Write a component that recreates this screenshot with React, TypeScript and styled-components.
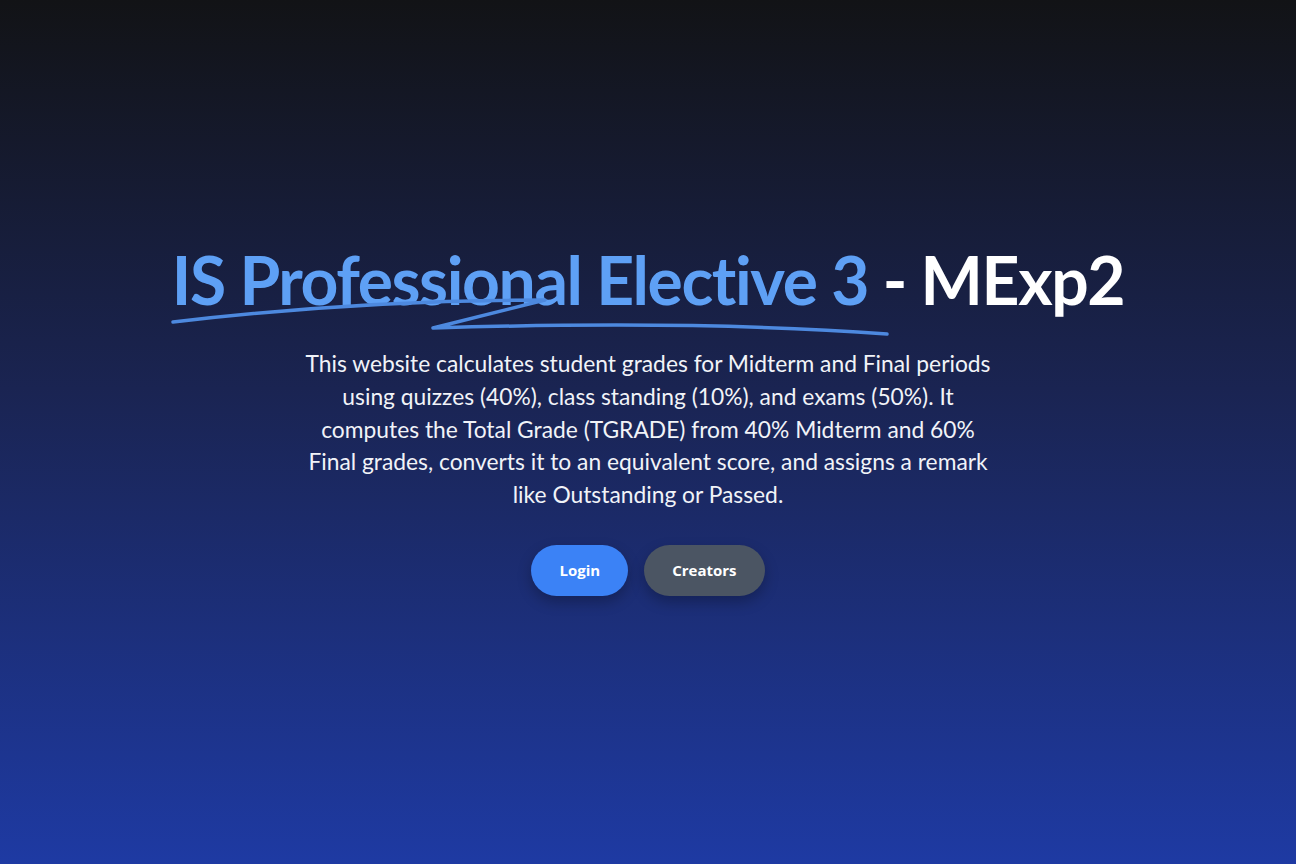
import React from "react";
import styled, { createGlobalStyle } from "styled-components";

const Global = createGlobalStyle`
  html, body { margin: 0; padding: 0; }
  body { font-family: Lato, "Open Sans", sans-serif; }
`;

const Page = styled.main`
  width: 100%;
  height: 864px;
  background: linear-gradient(180deg, #121316 0%, #1a2452 45%, #1e3aa3 100%);
  display: flex;
  flex-direction: column;
  align-items: center;
  box-sizing: border-box;
  padding-top: 238px;
`;

const TitleWrap = styled.div`
  position: relative;
`;

const Title = styled.h1`
  margin: 0;
  font-family: Lato, sans-serif;
  font-weight: 700;
  font-size: 66px;
  line-height: 84px;
  color: #fff;
  letter-spacing: -1.4px;
  white-space: nowrap;
`;

const Accent = styled.span`
  color: #5ea0f5;
`;

const Swoosh = styled.svg`
  position: absolute;
  left: 0;
  top: 0;
  width: 952px;
  height: 110px;
  pointer-events: none;
  overflow: visible;
`;

const Description = styled.p`
  margin: 25px 0 0;
  text-align: center;
  font-size: 22.8px;
  line-height: 32.8px;
  color: #f1f3f8;
  white-space: nowrap;
`;

const Actions = styled.div`
  display: flex;
  gap: 16px;
  margin-top: 34px;
`;

const Button = styled.button<{ $variant: "primary" | "secondary" }>`
  height: 51px;
  padding: 0 28px;
  border: none;
  border-radius: 999px;
  font-family: "Open Sans", sans-serif;
  font-weight: 700;
  font-size: 15px;
  color: #fff;
  background: ${(p) => (p.$variant === "primary" ? "#3b82f6" : "#4b5563")};
  box-shadow: 0 6px 14px rgba(0, 0, 0, 0.25);
  cursor: pointer;
`;

export default function App() {
  return (
    <>
      <Global />
      <Page>
        <TitleWrap>
          <Title>
            <Accent>IS Professional Elective 3</Accent> - MExp2
          </Title>
          <Swoosh viewBox="0 0 952 110">
            <path
              d="M1 84 Q188 62 373 62 L261 90 Q528 82 715 96"
              fill="none"
              stroke="#4d89df"
              strokeWidth="3.5"
              strokeLinecap="round"
              strokeLinejoin="round"
            />
          </Swoosh>
        </TitleWrap>
        <Description>
          This website calculates student grades for Midterm and Final periods
          <br />
          using quizzes (40%), class standing (10%), and exams (50%). It
          <br />
          computes the Total Grade (TGRADE) from 40% Midterm and 60%
          <br />
          Final grades, converts it to an equivalent score, and assigns a remark
          <br />
          like Outstanding or Passed.
        </Description>
        <Actions>
          <Button $variant="primary">Login</Button>
          <Button $variant="secondary">Creators</Button>
        </Actions>
      </Page>
    </>
  );
}
